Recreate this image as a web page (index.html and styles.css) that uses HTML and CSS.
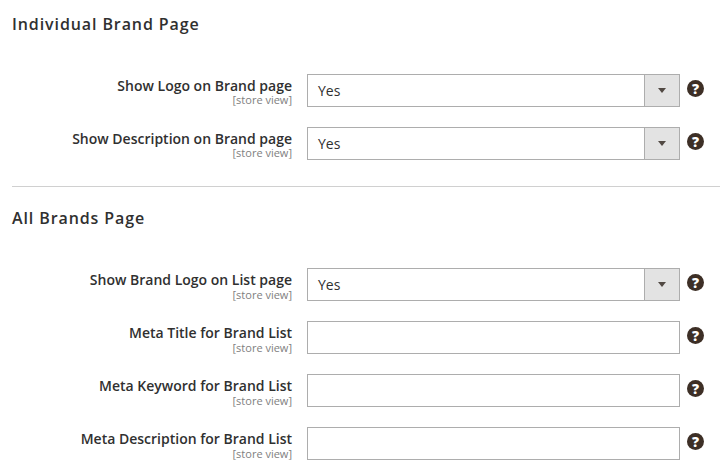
FILE: index.html
```html
<!DOCTYPE html>
<html lang="en">
<head>
    <meta charset="UTF-8">
    <title>Brand Settings</title>
    <link rel="stylesheet" href="styles.css">
</head>
<body>

<section class="group group-first">
    <h2>Individual Brand Page</h2>
    <div class="rows">
        <div class="row">
            <div class="label">Show Logo on Brand page<span>[store view]</span></div>
            <div class="select"><span class="value">Yes</span><span class="arrow"></span></div>
            <span class="help">?</span>
        </div>
        <div class="row">
            <div class="label">Show Description on Brand page<span>[store view]</span></div>
            <div class="select"><span class="value">Yes</span><span class="arrow"></span></div>
            <span class="help">?</span>
        </div>
    </div>
</section>

<section class="group">
    <h2>All Brands Page</h2>
    <div class="rows">
        <div class="row">
            <div class="label">Show Brand Logo on List page<span>[store view]</span></div>
            <div class="select"><span class="value">Yes</span><span class="arrow"></span></div>
            <span class="help">?</span>
        </div>
        <div class="row">
            <div class="label">Meta Title for Brand List<span>[store view]</span></div>
            <div class="input"></div>
            <span class="help">?</span>
        </div>
        <div class="row">
            <div class="label">Meta Keyword for Brand List<span>[store view]</span></div>
            <div class="input"></div>
            <span class="help">?</span>
        </div>
        <div class="row">
            <div class="label">Meta Description for Brand List<span>[store view]</span></div>
            <div class="input"></div>
            <span class="help">?</span>
        </div>
    </div>
</section>

</body>
</html>
```

FILE: styles.css
```css
body {
    margin: 0;
    padding-left: 12px;
    background: #fff;
    color: #303030;
    font-family: 'Open Sans', sans-serif;
    overflow: hidden;
}
h2 {
    margin: 0;
    font-size: 16px;
    line-height: 22px;
    font-weight: 600;
    letter-spacing: 0.9px;
    color: #303030;
}
.group {
    padding-top: 20px;
}
.group-first {
    padding-top: 13px;
    padding-bottom: 26px;
    border-bottom: 1px solid #d0d0d0;
}
.rows {
    display: flex;
    flex-direction: column;
    gap: 20px;
    margin-top: 39px;
}
.row {
    display: flex;
    align-items: flex-start;
    height: 33px;
}
.label {
    width: 280px;
    padding-top: 2px;
    text-align: right;
    font-size: 14px;
    line-height: 19px;
    font-weight: 600;
    white-space: nowrap;
}
.label span {
    display: block;
    font-size: 11px;
    line-height: 12px;
    font-weight: 400;
    color: #808080;
}
.group-first .label span {
    margin-top: -1px;
}
.select, .input {
    display: flex;
    box-sizing: border-box;
    width: 373px;
    height: 33px;
    margin-left: 15px;
    border: 1px solid #adadad;
    background: #fff;
}
.value {
    flex: 1;
    padding-left: 10px;
    font-size: 14px;
    line-height: 31px;
}
.arrow {
    position: relative;
    width: 34px;
    border-left: 1px solid #adadad;
    background: #e3e3e3;
}
.arrow::after {
    content: '';
    position: absolute;
    top: 13px;
    left: 13px;
    border-top: 5px solid #514943;
    border-left: 4px solid transparent;
    border-right: 4px solid transparent;
}
.help {
    width: 17px;
    height: 17px;
    margin: 6px 0 0 7px;
    border-radius: 50%;
    background: #3d2f26;
    color: #fff;
    font-size: 14px;
    line-height: 17px;
    font-weight: 800;
    text-align: center;
}
```
